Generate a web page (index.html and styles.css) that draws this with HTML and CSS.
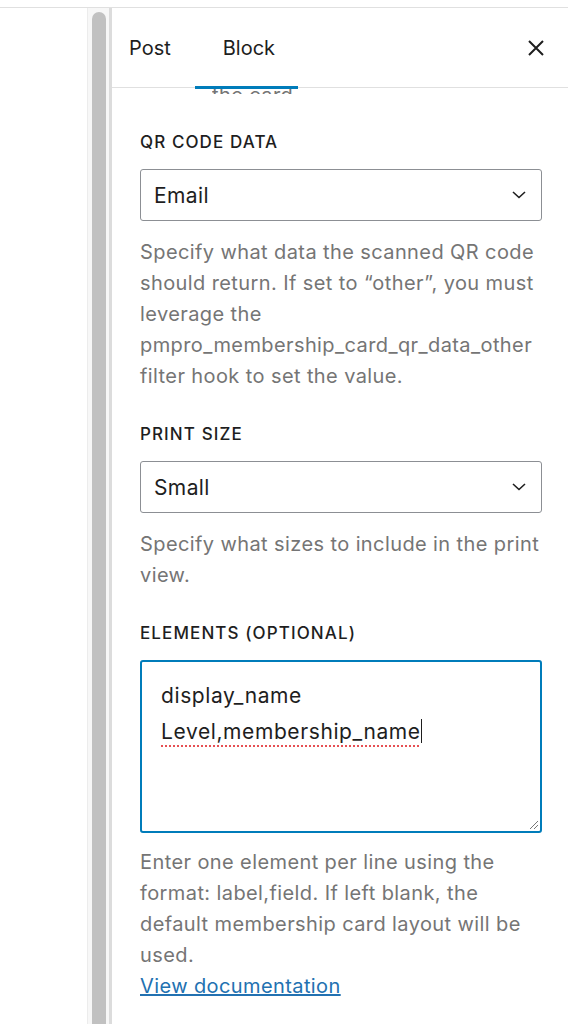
FILE: index.html
```html
<!DOCTYPE html>
<html lang="en">
<head>
    <meta charset="UTF-8">
    <meta name="viewport" content="width=device-width, initial-scale=1.0">
    <title>Block Settings</title>
    <link rel="stylesheet" href="styles.css">
</head>
<body>
    <div class="editor">
        <div class="canvas"></div>
        <div class="scroll-track">
            <div class="scroll-thumb"></div>
        </div>

        <div class="sidebar">
            <div class="sidebar-header">
                <div class="tabs">
                    <button class="tab">Post</button>
                    <button class="tab active">Block</button>
                </div>
                <button class="close-btn" aria-label="Close settings">
                    <svg width="24" height="24" viewBox="0 0 24 24">
                        <path d="M5 5 L19 19 M19 5 L5 19" stroke="#1e1e1e" stroke-width="2" fill="none"/>
                    </svg>
                </button>
            </div>

            <div class="sidebar-body">
                <div class="clipped-help"><span>the card.</span></div>

                <div class="field">
                    <label class="field-label">QR Code Data</label>
                    <div class="select">
                        <span>Email</span>
                        <svg class="chevron" width="16" height="10" viewBox="0 0 16 10">
                            <path d="M2 2 L8 7.5 L14 2" stroke="#1e1e1e" stroke-width="1.6" fill="none"/>
                        </svg>
                    </div>
                    <p class="help">Specify what data the scanned QR code should return. If set to “other”, you must leverage the pmpro_membership_card_qr_data_other filter hook to set the value.</p>
                </div>

                <div class="field">
                    <label class="field-label">Print Size</label>
                    <div class="select">
                        <span>Small</span>
                        <svg class="chevron" width="16" height="10" viewBox="0 0 16 10">
                            <path d="M2 2 L8 7.5 L14 2" stroke="#1e1e1e" stroke-width="1.6" fill="none"/>
                        </svg>
                    </div>
                    <p class="help">Specify what sizes to include in the print view.</p>
                </div>

                <div class="field">
                    <label class="field-label">Elements (optional)</label>
                    <div class="textarea">
                        <div class="line">display_name</div>
                        <div class="line"><span class="misspelled">Level,membership_name</span><span class="caret"></span></div>
                        <svg class="resize" width="12" height="12" viewBox="0 0 12 12">
                            <path d="M11 3 L3 11 M11 7 L7 11" stroke="#777" stroke-width="1" fill="none"/>
                        </svg>
                    </div>
                    <p class="help">Enter one element per line using the format: label,field. If left blank, the default membership card layout will be used.<br><a href="#">View documentation</a></p>
                </div>
            </div>
        </div>
    </div>
</body>
</html>
```

FILE: styles.css
```css
body {
    margin: 0;
    background: #fff;
    font-family: 'Inter', 'Liberation Sans', sans-serif;
    color: #1e1e1e;
}

.editor {
    display: flex;
    height: 1017px;
    margin-top: 7px;
    border-top: 1px solid #e0e0e0;
    overflow: hidden;
}

.canvas {
    width: 87px;
    flex-shrink: 0;
}

.scroll-track {
    width: 21px;
    flex-shrink: 0;
    background: #f7f7f7;
    border-left: 1px solid #ececec;
    border-right: 3px solid #dcdcdc;
    display: flex;
    justify-content: center;
    padding-top: 4px;
}

.scroll-thumb {
    width: 14px;
    height: 1200px;
    background: #c1c1c1;
    border-radius: 7px;
}

.sidebar {
    flex: 1;
    display: flex;
    flex-direction: column;
}

.sidebar-header {
    height: 79px;
    display: flex;
    align-items: center;
    justify-content: space-between;
    border-bottom: 1px solid #e0e0e0;
    position: relative;
    z-index: 1;
    background: #fff;
}

.tabs {
    display: flex;
    height: 100%;
}

.tab {
    background: none;
    border: none;
    font-family: inherit;
    font-size: 20px;
    color: #1e1e1e;
    padding: 0 24px 0 17px;
    height: 100%;
    position: relative;
    cursor: pointer;
}

.tab.active {
    padding: 0 23px 0 28px;
}

.tab.active::after {
    content: '';
    position: absolute;
    left: 0;
    right: 0;
    bottom: -2px;
    height: 3px;
    background: #007cba;
}

.close-btn {
    background: none;
    border: none;
    padding: 0;
    margin-right: 20px;
    display: flex;
    cursor: pointer;
}

.sidebar-body {
    padding: 0 26px 0 28px;
}

.clipped-help {
    height: 6px;
    overflow: hidden;
    position: relative;
    margin-left: 72px;
}

.clipped-help span {
    position: absolute;
    bottom: 0;
    font-size: 20px;
    line-height: 20px;
    letter-spacing: 0.4px;
    color: #757575;
    white-space: nowrap;
    transform: translateY(11px);
}

.field {
    margin-top: 32px;
}

.clipped-help + .field {
    margin-top: 38px;
}

.field-label {
    display: block;
    font-size: 17px;
    font-weight: 500;
    letter-spacing: 1.1px;
    text-transform: uppercase;
    line-height: 20px;
    margin-bottom: 17px;
}

.select {
    height: 52px;
    box-sizing: border-box;
    border: 1px solid #8c8f94;
    border-radius: 3px;
    display: flex;
    align-items: center;
    justify-content: space-between;
    padding: 0 14px 0 13px;
    font-size: 21px;
    letter-spacing: 0.4px;
}

.help {
    margin: 16px 0 0;
    font-size: 20px;
    line-height: 31px;
    letter-spacing: 0.4px;
    color: #757575;
}

.help a {
    color: #2271b1;
}

.textarea {
    height: 173px;
    box-sizing: border-box;
    border: 2px solid #007cba;
    border-radius: 3px;
    padding: 16px 19px 0;
    font-size: 21px;
    line-height: 36px;
    letter-spacing: 0.6px;
    position: relative;
}

.textarea + .help {
    margin-top: 14px;
}

.misspelled {
    text-decoration: underline dotted #e65054;
    text-decoration-thickness: 2px;
    text-underline-offset: 6px;
}

.caret {
    display: inline-block;
    width: 1px;
    height: 24px;
    background: #1e1e1e;
    vertical-align: -4px;
}

.resize {
    position: absolute;
    right: 1px;
    bottom: 1px;
}
```
